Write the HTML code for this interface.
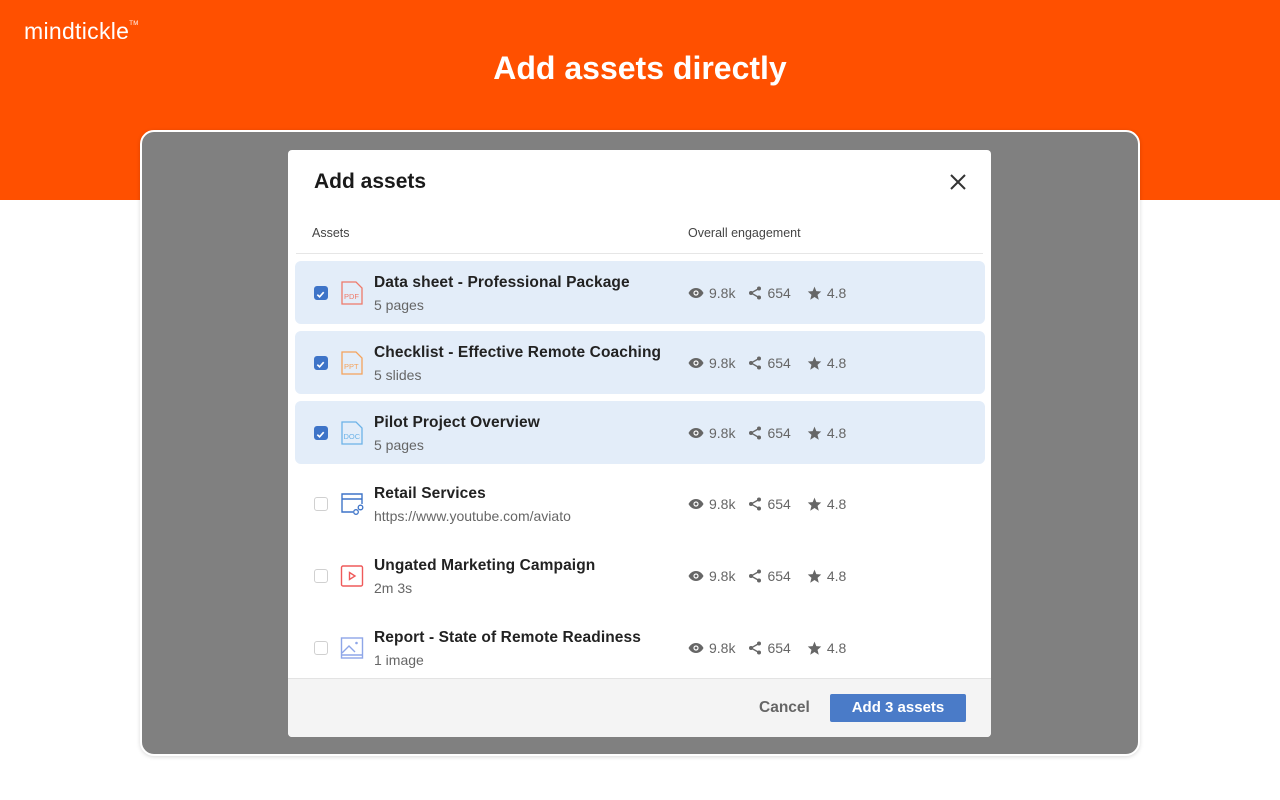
<!DOCTYPE html>
<html><head><style>
*{margin:0;padding:0;box-sizing:border-box}
body{width:1280px;height:800px;background:#fff;font-family:"Liberation Sans",sans-serif;position:relative;overflow:hidden}
.top{position:absolute;left:0;top:0;width:1280px;height:200px;background:#ff5000}
.logo{position:absolute;left:24px;top:18px;color:#fff;font-size:23px;letter-spacing:0.3px}
.logo sup{font-size:6px;vertical-align:top;position:relative;top:3px}
h1{position:absolute;top:50px;width:1280px;text-align:center;color:#fff;font-size:32px;font-weight:bold}
.frame{position:absolute;left:140px;top:130px;width:1000px;height:626px;background:#808080;border:2px solid #fff;border-radius:14px;box-shadow:0 1px 4px rgba(0,0,0,.15)}
.modal{position:absolute;left:288px;top:150px;width:703px;height:587px;background:#fff;border-radius:4px;overflow:hidden}
.mt{position:absolute;left:26px;top:20px;font-size:21px;color:#1a1a1a;font-weight:bold}
.x{position:absolute;left:660px;top:22px}
.hd{position:absolute;top:76px;font-size:12.5px;color:#444}
.hl{position:absolute;left:8px;right:8px;top:103px;height:1px;background:#e6e6e6}
.row{position:absolute;left:7px;width:690px;height:63px;border-radius:6px}
.sel{background:#e3edf9}
.cb{position:absolute;left:19px;top:25px;width:14px;height:14px;border-radius:3px;border:1.5px solid #d0d0d0;background:#fff}
.sel .cb{background:#3e74c8;border-color:#3e74c8}
.ic{position:absolute;left:45px;top:20px}
.t{position:absolute;left:79px;top:13px;font-size:15.5px;color:#222;font-weight:bold;letter-spacing:0.1px}
.s{position:absolute;left:79px;top:36px;font-size:14px;color:#666}
.st{position:absolute;left:393px;top:24px;font-size:14px;color:#666;display:flex;align-items:center;white-space:nowrap}
.st svg{margin-right:5px}
.ft{position:absolute;left:0;top:528px;width:703px;height:59px;background:#f4f4f4;border-top:1px solid #e3e3e3}
.cn{position:absolute;left:471px;top:20px;font-size:15.5px;color:#666;font-weight:bold}
.bt{position:absolute;left:542px;top:15px;width:136px;height:28px;background:#4a7bc8;color:#fff;font-size:15px;font-weight:bold;text-align:center;line-height:28px;border-radius:2px}
</style></head><body>
<div class="top"></div>
<div class="logo">mindtickle<sup>TM</sup></div>
<h1>Add assets directly</h1>
<div class="frame"></div>
<div class="modal">
<div class="mt">Add assets</div>
<svg class="x" width="20" height="20" viewBox="0 0 20 20"><path d="M3 3L17 17M17 3L3 17" stroke="#333" stroke-width="2"/></svg>
<div class="hd" style="left:24px">Assets</div>
<div class="hd" style="left:400px">Overall engagement</div>
<div class="hl"></div>

<div class="row sel" style="top:111px"><div class="cb"><svg width="11" height="11" viewBox="0 0 12 12"><path d="M2.5 6.2L5 8.5L9.5 3.5" stroke="#fff" stroke-width="1.8" fill="none"/></svg></div>
<svg class="ic" width="24" height="24" viewBox="0 0 24 24"><path d="M2 1H16L22 7V23H2Z" fill="none" stroke="#ef7a6a" stroke-width="1.3"/><text x="4" y="18" font-size="7.5" fill="#ef7a6a" font-family="Liberation Sans">PDF</text></svg>
<div class="t">Data sheet - Professional Package</div><div class="s">5 pages</div></div>

<div class="row sel" style="top:181px"><div class="cb"><svg width="11" height="11" viewBox="0 0 12 12"><path d="M2.5 6.2L5 8.5L9.5 3.5" stroke="#fff" stroke-width="1.8" fill="none"/></svg></div>
<svg class="ic" width="24" height="24" viewBox="0 0 24 24"><path d="M2 1H16L22 7V23H2Z" fill="none" stroke="#f5a35c" stroke-width="1.3"/><text x="4" y="18" font-size="7.5" fill="#f5a35c" font-family="Liberation Sans">PPT</text></svg>
<div class="t">Checklist - Effective Remote Coaching</div><div class="s">5 slides</div></div>

<div class="row sel" style="top:251px"><div class="cb"><svg width="11" height="11" viewBox="0 0 12 12"><path d="M2.5 6.2L5 8.5L9.5 3.5" stroke="#fff" stroke-width="1.8" fill="none"/></svg></div>
<svg class="ic" width="24" height="24" viewBox="0 0 24 24"><path d="M2 1H16L22 7V23H2Z" fill="none" stroke="#6cb3e8" stroke-width="1.3"/><text x="3.5" y="18" font-size="7.5" fill="#6cb3e8" font-family="Liberation Sans">DOC</text></svg>
<div class="t">Pilot Project Overview</div><div class="s">5 pages</div></div>

<div class="row" style="top:322px"><div class="cb"></div>
<svg class="ic" width="24" height="24" viewBox="0 0 24 24"><path d="M13 20H2V2H22V12M2 7H22" fill="none" stroke="#3e74c8" stroke-width="1.4"/><circle cx="16" cy="20" r="2.3" fill="none" stroke="#3e74c8" stroke-width="1.3"/><circle cx="20.5" cy="15.5" r="2.3" fill="none" stroke="#3e74c8" stroke-width="1.3"/></svg>
<div class="t">Retail Services</div><div class="s">https://www.youtube.com/aviato</div></div>

<div class="row" style="top:394px"><div class="cb"></div>
<svg class="ic" width="24" height="24" viewBox="0 0 24 24"><rect x="1.5" y="2" width="21" height="20" rx="1.5" fill="none" stroke="#ef5a5a" stroke-width="1.4"/><path d="M9.5 8.5L15 12L9.5 15.5Z" fill="none" stroke="#ef5a5a" stroke-width="1.4"/></svg>
<div class="t">Ungated Marketing Campaign</div><div class="s">2m 3s</div></div>

<div class="row" style="top:466px"><div class="cb"></div>
<svg class="ic" width="24" height="24" viewBox="0 0 24 24"><rect x="1.5" y="2" width="21" height="20" fill="none" stroke="#8ea6e8" stroke-width="1.4"/><path d="M2 17L9 10L15 16M2 19H22" fill="none" stroke="#8ea6e8" stroke-width="1.4"/><circle cx="16.5" cy="7" r="1.3" fill="#8ea6e8"/></svg>
<div class="t">Report - State of Remote Readiness</div><div class="s">1 image</div></div>

<div class="ft"><div class="cn">Cancel</div><div class="bt">Add 3 assets</div></div>
</div>
<script>
var st='<div class="st"><svg width="16" height="12" viewBox="0 0 16 12"><path d="M8 1C4 1 1.5 4 0.5 6C1.5 8 4 11 8 11C12 11 14.5 8 15.5 6C14.5 4 12 1 8 1Z" fill="#666"/><circle cx="8" cy="6" r="2.6" fill="#fff"/><circle cx="8" cy="6" r="1.4" fill="#666"/></svg>9.8k<svg style="margin-left:13px" width="14" height="14" viewBox="0 0 14 14"><circle cx="11" cy="2.5" r="2" fill="#666"/><circle cx="3" cy="7" r="2" fill="#666"/><circle cx="11" cy="11.5" r="2" fill="#666"/><path d="M11 2.5L3 7L11 11.5" stroke="#666" stroke-width="1.3" fill="none"/></svg>654<svg style="margin-left:16px" width="15" height="14" viewBox="0 0 24 23"><path d="M12 1L15 8.5L23 9L17 14.5L19 22.5L12 18L5 22.5L7 14.5L1 9L9 8.5Z" fill="#666"/></svg>4.8</div>';
document.querySelectorAll('.row').forEach(function(r){r.insertAdjacentHTML('beforeend',st)});
</script>
</body></html>
